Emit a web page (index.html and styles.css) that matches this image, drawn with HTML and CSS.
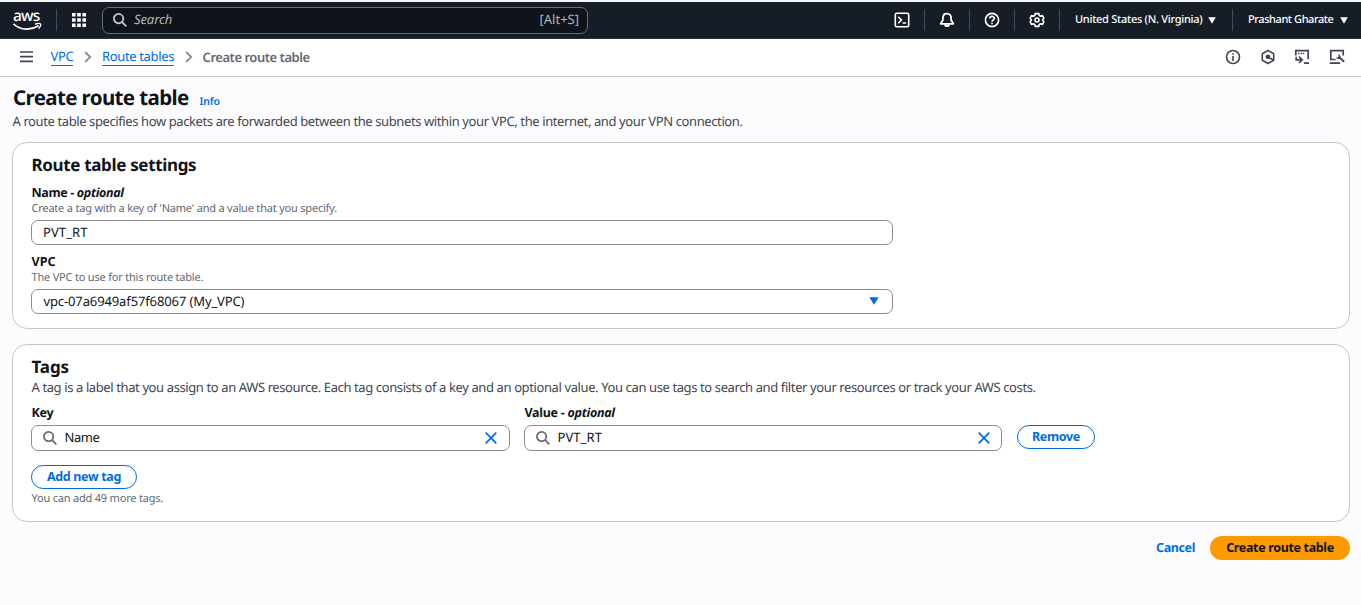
FILE: index.html
```html
<!DOCTYPE html>
<html lang="en">
<head>
<meta charset="utf-8">
<title>Create route table | VPC</title>
<link rel="stylesheet" href="styles.css">
</head>
<body>
<header class="topnav">
  <a class="logo" aria-label="aws"><span class="logo-word">aws</span>
    <svg class="logo-smile" width="30" height="9" viewBox="0 0 30 9" fill="none" stroke="#fff" stroke-width="1.7" stroke-linecap="round"><path d="M1 2.300C8 8.400 18 8.400 25 4"/><path d="M22.500 2C24.500 1.500 26.800 1.200 27.400 1.900S27 5 25.900 6.300" stroke-width="1.300"/></svg>
  </a>
  <span class="rule rule-logo"></span>
  <svg class="apps" width="14" height="14" viewBox="0 0 14 14" fill="#fff"><path d="M0 0h3.600v3.600H0zM5.200 0h3.600v3.600H5.200zM10.400 0H14v3.600h-3.600zM0 5.200h3.600v3.600H0zM5.200 5.200h3.600v3.600H5.200zM10.400 5.200H14v3.600h-3.600zM0 10.400h3.600V14H0zM5.200 10.400h3.600V14H5.200zM10.400 10.400H14V14h-3.600z"/></svg>
  <div class="search">
    <svg width="14" height="14" viewBox="0 0 14 14" fill="none" stroke="#c6c6cd" stroke-width="1.800"><circle cx="5.600" cy="5.600" r="4.700"/><path d="M8.900 8.900l4.400 4.400"/></svg>
    <span class="search-hint">Search</span>
    <span class="search-key">[Alt+S]</span>
  </div>
  <nav class="tools">
    <span class="tool"><svg width="16" height="16" viewBox="0 0 16 16" fill="none" stroke="#fff" stroke-width="1.600"><rect x="1.300" y="1.300" width="13.400" height="13.400" rx="1.500"/><path d="M4.200 4.800L7.400 8l-3.200 3.200M8.600 11h3.500"/></svg></span>
    <span class="tool"><svg width="16" height="16" viewBox="0 0 16 16" fill="none" stroke="#fff" stroke-width="1.800" stroke-linejoin="round"><path d="M8 1.600C5.200 1.600 3.900 3.600 3.900 6v2L1.700 11.800h12.600L12.100 8V6c0-2.400-1.300-4.400-4.100-4.400z"/><path d="M5.200 12.500h5.600a2.800 2.600 0 0 1-5.600 0z" fill="#fff" stroke="none"/></svg></span>
    <span class="tool"><svg width="16" height="16" viewBox="0 0 16 16" fill="none" stroke="#fff" stroke-width="1.600"><circle cx="8" cy="8" r="6.600"/><path d="M5.800 6.500C5.800 3.700 10.300 3.800 10.300 6.300 10.300 7.900 8 7.900 8 9.800M8 10.700v1.500"/></svg></span>
    <span class="tool"><svg width="16" height="16" viewBox="0 0 16 16" fill="none" stroke="#fff" stroke-width="1.600" stroke-linejoin="round"><path d="M6.200 1.600h3.600l.5 1.900 1.300.7 1.900-.6 1.200 2.200v.8L13.500 8l1.200 1.400v.8l-1.200 2.200-1.900-.6-1.300.7-.5 1.900H6.200l-.5-1.900-1.300-.7-1.900.6-1.200-2.200v-.8L2.500 8 1.300 6.600v-.8l1.200-2.200 1.900.6 1.300-.7z"/><circle cx="8" cy="8" r="2"/></svg></span>
    <span class="menu region"><span class="menu-text">United States (N. Virginia)</span><svg width="8" height="7" viewBox="0 0 8 7" fill="#fff"><path d="M.2.300h7.600L4 6.700z"/></svg></span>
    <span class="menu account"><span class="menu-text">Prashant Gharate</span><svg width="8" height="7" viewBox="0 0 8 7" fill="#fff"><path d="M.2.300h7.600L4 6.700z"/></svg></span>
  </nav>
</header>

<div class="crumbs">
  <svg class="burger" width="14" height="12" viewBox="0 0 14 12" stroke="#424650" stroke-width="1.700"><path d="M0 1h13M0 5.700h13M0 10.400h13"/></svg>
  <a class="crumb crumb-vpc">VPC</a>
  <svg class="chev" width="8" height="12" viewBox="0 0 8 12" fill="none" stroke="#8c8c94" stroke-width="1.800"><path d="M1.200 1l5 5-5 5"/></svg>
  <a class="crumb crumb-tables">Route tables</a>
  <svg class="chev" width="8" height="12" viewBox="0 0 8 12" fill="none" stroke="#8c8c94" stroke-width="1.800"><path d="M1.200 1l5 5-5 5"/></svg>
  <span class="crumb-current">Create route table</span>
  <div class="crumb-tools">
    <svg width="16" height="16" viewBox="0 0 16 16" fill="none" stroke="#424650" stroke-width="1.600"><circle cx="8" cy="8" r="6.500"/><path d="M8 7v5M8 4.200v1.600"/></svg>
    <svg width="16" height="16" viewBox="0 0 16 16" fill="none" stroke="#424650" stroke-width="1.600"><path d="M8 1.500l5.700 3.300v6.400L8 14.500l-5.700-3.300V4.800z"/><circle cx="7.900" cy="7.800" r="2.300" fill="#424650" stroke="none"/><path d="M8 8l5 2.800"/></svg>
    <svg width="16" height="16" viewBox="0 0 16 16" fill="none" stroke="#424650" stroke-width="1.700"><path d="M1.800 6.500V1.600h12.400v8.600M4 4.500h1.400M6.400 4.500h1.400M8.800 4.500h1.400M2.200 7.800v3h5.600M5 7.600l3.200 3.200L5 14M10 14.200h5"/></svg>
    <svg width="16" height="16" viewBox="0 0 16 16" fill="none" stroke="#424650" stroke-width="1.700"><path d="M6.500 10.500H1.800V1.600h12.400V6.500M.8 14.100h10.400"/><path d="M10.200 8.300l4.900 4.500" stroke-width="1.900"/><path d="M8.900 5.500a2.500 2.500 0 0 1 2.600 3.400 2.400 2.400 0 0 1-3.700.5L7 8.200l1.700.3 1-1z" fill="#424650" stroke="none"/></svg>
  </div>
</div>

<main class="page">
  <div class="title-row"><h1>Create route table</h1><a class="info">Info</a></div>
  <p class="lead">A route table specifies how packets are forwarded between the subnets within your VPC, the internet, and your VPN connection.</p>

  <section class="card settings">
    <h2>Route table settings</h2>
    <label class="label label-name">Name - <i>optional</i></label>
    <p class="hint">Create a tag with a key of 'Name' and a value that you specify.</p>
    <div class="field"><span class="val-rt">PVT_RT</span></div>
    <label class="label label-vpc">VPC</label>
    <p class="hint">The VPC to use for this route table.</p>
    <div class="field"><span class="val-vpc">vpc-07a6949af57f68067 (My_VPC)</span>
      <svg class="field-end" width="10" height="8" viewBox="0 0 10 8" fill="#006ce0"><path d="M.3.300h9.400L5 7.700z"/></svg></div>
  </section>

  <section class="card tags">
    <h2 class="tags-title">Tags</h2>
    <p class="desc">A tag is a label that you assign to an AWS resource. Each tag consists of a key and an optional value. You can use tags to search and filter your resources or track your AWS costs.</p>
    <div class="tag-row">
      <div class="tag-col key-col">
        <label class="label">Key</label>
        <div class="field"><svg width="14" height="14" viewBox="0 0 14 14" fill="none" stroke="#656871" stroke-width="1.700"><circle cx="5.600" cy="5.600" r="4.700"/><path d="M8.900 8.900l4.400 4.400"/></svg><span class="val-name">Name</span>
          <svg class="field-end" width="12" height="12" viewBox="0 0 12 12" stroke="#006ce0" stroke-width="1.700"><path d="M.7.700l10.600 10.600M11.300.7L.7 11.300"/></svg></div>
      </div>
      <div class="tag-col value-col">
        <label class="label">Value - <i>optional</i></label>
        <div class="field"><svg width="14" height="14" viewBox="0 0 14 14" fill="none" stroke="#656871" stroke-width="1.700"><circle cx="5.600" cy="5.600" r="4.700"/><path d="M8.900 8.900l4.400 4.400"/></svg><span class="val-rt">PVT_RT</span>
          <svg class="field-end" width="12" height="12" viewBox="0 0 12 12" stroke="#006ce0" stroke-width="1.700"><path d="M.7.700l10.600 10.600M11.300.7L.7 11.300"/></svg></div>
      </div>
      <button class="btn remove">Remove</button>
    </div>
    <button class="btn add">Add new tag</button>
    <p class="hint hint-more">You can add 49 more tags.</p>
  </section>

  <div class="actions">
    <a class="cancel">Cancel</a>
    <button class="btn primary">Create route table</button>
  </div>
</main>
</body>
</html>
```
FILE: styles.css
```css
* { box-sizing: border-box; }
body { margin: 0; padding-top: 2px; height: 605px; overflow: hidden; background: #fcfcfe; color: #0f141a; font: 13px/18px "Noto Sans", "Open Sans", sans-serif; box-shadow: inset 0 2px #f4f6f8; text-rendering: geometricPrecision; }
h1, h2, p { margin: 0; white-space: nowrap; }
svg { display: block; flex: none; }
a, span, label { white-space: nowrap; }

.topnav { display: flex; align-items: center; height: 37px; background: #161d26; border-bottom: 1px solid #2d343e; color: #fff; }
.logo { width: 30px; height: 22px; margin-left: 13px; }
.logo-word { display: block; height: 13px; padding-top: 1px; font-size: 15.500px; line-height: 10px; font-weight: 500; letter-spacing: -0.8px; }
.rule { width: 1px; height: 22px; background: #424a55; }
.rule-logo { margin-left: 13px; }
.apps { margin-left: 15px; }
.search { display: flex; align-items: center; width: 486px; height: 27px; margin-left: 16px; padding: 0 8px 1px 10px; border: 1px solid #656e7a; border-radius: 7px; background: #0f141a; color: #b4b4bb; }
.search-hint { margin-left: 7px; font-style: italic; letter-spacing: -0.1px; }
.search-key { margin-left: auto; }
.search-hint, .search-key { margin-top: -1px; }
.tools { display: flex; align-items: center; margin-left: auto; }
.tool { display: flex; justify-content: center; width: 45px; height: 22px; align-items: center; border-right: 1px solid #424a55; }
.menu { display: flex; align-items: center; height: 22px; font-size: 11px; font-weight: 500; }
.region { width: 173px; padding-left: 15px; gap: 6px; border-right: 1px solid #424a55; letter-spacing: -0.280px; }
.account { width: 128px; padding-left: 15px; gap: 6px; letter-spacing: -0.430px; }
.menu-text { margin-top: -1px; }

.crumbs { display: flex; align-items: center; height: 38px; padding: 0 16.500px 1px 20px; background: #fff; border-bottom: 1px solid #c2c5ca; }
.crumb { height: 18px; line-height: 17px; color: #006ce0; border-bottom: 1px solid #006ce0; }
.crumb-vpc { margin-left: 16.500px; letter-spacing: -0.300px; }
.crumb-tables { letter-spacing: -0.350px; }
.chev { margin: 0 9.500px 0 11px; }
.crumb-current { color: #656871; font-weight: 600; letter-spacing: -0.470px; }
.crumb-tools { display: flex; gap: 18.500px; margin-left: auto; }

.page { padding: 9px 11px 0 12px; }
.title-row { display: flex; align-items: baseline; height: 26px; gap: 11px; padding-left: 1px; }
h1 { font-size: 20.500px; line-height: 24px; font-weight: 700; letter-spacing: -0.620px; }
.info { color: #006ce0; font-size: 10.500px; font-weight: 600; letter-spacing: -0.150px; }
.lead { padding-left: 0.500px; color: #424650; letter-spacing: -0.396px; }
.card { margin-top: 12px; padding: 12px 18px 0; border: 1px solid #c6c6cd; border-radius: 15px; background: #fff; }
.settings { height: 187px; }
.tags { height: 178px; margin-top: 15px; }
h2 { padding-left: 0.500px; margin-top: -1px; margin-bottom: 1px; font-size: 17px; line-height: 21px; font-weight: 700; letter-spacing: -0.340px; }
.tags-title { letter-spacing: -0.1px; }
.label { display: block; padding-left: 0.500px; font-size: 12.500px; line-height: 18px; font-weight: 700; letter-spacing: -0.280px; }
.label-name { margin-top: 9px; letter-spacing: -0.350px; }
.hint { padding-left: 0.500px; margin-top: -1px; color: #656871; font-size: 11px; line-height: 15px; letter-spacing: -0.200px; }
.field { display: flex; align-items: center; width: 862px; height: 25px; margin-top: 4px; padding: 0 13px 1px 11px; border: 1px solid #8c8c94; border-radius: 7px; background: #fff; }
.field-end { margin-left: auto; }
.val-rt { letter-spacing: 0.1px; }
.val-vpc { padding-left: 0.500px; letter-spacing: -0.120px; margin-top: -1px; }
.label-vpc { margin-top: 8px; letter-spacing: 0; }
.desc { padding-left: 0.500px; color: #424650; letter-spacing: -0.391px; }
.tag-row { display: flex; align-items: flex-end; margin-top: 8px; }
.tag-col .field { height: 26px; gap: 8px; margin-top: 3px; padding: 0 12px 0 10.500px; }
.tag-col .field span { margin-top: -2px; }
.key-col { width: 479px; margin-right: 14px; }
.value-col { width: 478px; margin-right: 15px; }
.key-col .field, .value-col .field { width: 100%; }
.value-col .field { padding-right: 11px; }
.val-name { letter-spacing: -0.450px; }
.btn { display: block; height: 24px; padding: 0; border: 1.500px solid #006ce0; border-radius: 12px; background: #fff; color: #006ce0; font: 700 12.500px/18px "Noto Sans", sans-serif; letter-spacing: -0.340px; white-space: nowrap; }
.remove { width: 78px; margin-bottom: 2px; }
.add { width: 106px; margin-top: 14px; }
.hint-more { margin-top: 2px; }
.actions { display: flex; align-items: center; justify-content: flex-end; gap: 15px; margin-top: 14px; }
.cancel { color: #006ce0; font-size: 12.500px; font-weight: 700; letter-spacing: -0.400px; }
.primary { width: 140px; border: 0; background: #ff9900; color: #0f141a; }
```
